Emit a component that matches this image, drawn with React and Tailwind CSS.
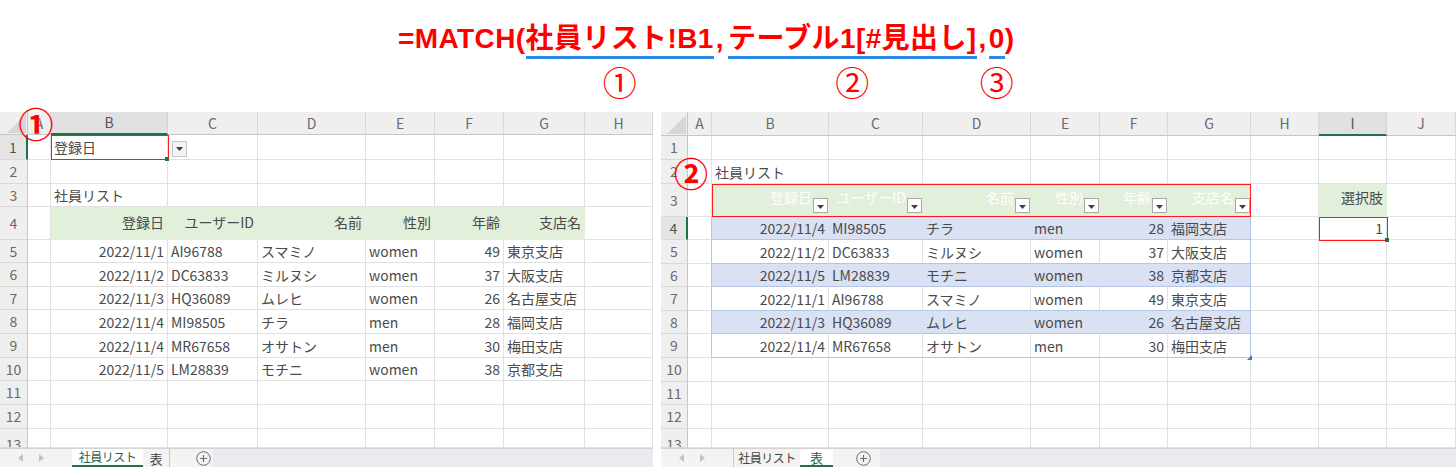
import React from "react";

const LEFT_LETTERS = ["A", "B", "C", "D", "E", "F", "G", "H"];
const RIGHT_LETTERS = ["A", "B", "C", "D", "E", "F", "G", "H", "I", "J"];

const HEADERS = ["登録日", "ユーザーID", "名前", "性別", "年齢", "支店名"];
const ALIGN = ["right", "left", "left", "left", "right", "left"];

const leftRows = [
  ["2022/11/1", "AI96788", "スマミノ", "women", "49", "東京支店"],
  ["2022/11/2", "DC63833", "ミルヌシ", "women", "37", "大阪支店"],
  ["2022/11/3", "HQ36089", "ムレヒ", "women", "26", "名古屋支店"],
  ["2022/11/4", "MI98505", "チラ", "men", "28", "福岡支店"],
  ["2022/11/4", "MR67658", "オサトン", "men", "30", "梅田支店"],
  ["2022/11/5", "LM28839", "モチニ", "women", "38", "京都支店"],
];

const rightRows = [
  ["2022/11/4", "MI98505", "チラ", "men", "28", "福岡支店"],
  ["2022/11/2", "DC63833", "ミルヌシ", "women", "37", "大阪支店"],
  ["2022/11/5", "LM28839", "モチニ", "women", "38", "京都支店"],
  ["2022/11/1", "AI96788", "スマミノ", "women", "49", "東京支店"],
  ["2022/11/3", "HQ36089", "ムレヒ", "women", "26", "名古屋支店"],
  ["2022/11/4", "MR67658", "オサトン", "men", "30", "梅田支店"],
];

// background + border colours of a cell, one entry per look
const STYLES = {
  plain: "bg-white border-r-[#e1e1e1] border-b-[#e1e1e1]",
  green: "bg-[#e2efda] border-r-[#e2efda] border-b-[#e2efda]",
  blue: "bg-[#d9e1f2] border-r-[#d9e1f2] border-b-[#b4c6e7]",
  blueEdge: "bg-[#d9e1f2] border-r-[#b4c6e7] border-b-[#b4c6e7]",
  white: "bg-white border-r-[#e1e1e1] border-b-[#b4c6e7]",
  whiteEdge: "bg-white border-r-[#b4c6e7] border-b-[#b4c6e7]",
  tableLeft: "bg-white border-r-[#b4c6e7] border-b-[#e1e1e1]",
};

function Arrow() {
  return (
    <svg width="7" height="4" viewBox="0 0 7 4">
      <path d="M0 0h7L3.5 4z" fill="#404040" />
    </svg>
  );
}

function FilterButton() {
  return (
    <div className="absolute right-0 bottom-[3px] w-[15px] h-[15px] bg-white border border-[#a9a9a9] flex items-end justify-center pb-[3px]">
      <Arrow />
    </div>
  );
}

function Cell({ spec, last }) {
  const style = STYLES[spec.style || "plain"];
  const align = spec.align === "right" ? "justify-end pr-[3px]" : "justify-start pl-[3px]";
  const pos = last ? "items-start pt-[5px] overflow-hidden" : "items-center";
  return (
    <div className={`relative flex whitespace-nowrap border-r border-b text-[14px] leading-[16px] ${style} ${align} ${pos}`}>
      {spec.head ? (
        <span className="pr-[13px] pb-[6px] text-white">{spec.text}</span>
      ) : (
        <span className={spec.pad || ""}>{spec.text}</span>
      )}
      {spec.head && <FilterButton />}
    </div>
  );
}

function ColHead({ label, selected }) {
  return selected ? (
    <div className="flex items-center justify-center bg-[#e1e1e1] border-r border-b-2 border-r-[#d4d4d4] border-b-[#217346] text-[14px] text-[#555]">
      {label}
    </div>
  ) : (
    <div className="flex items-center justify-center bg-[#efefef] border-r border-b border-r-[#d9d9d9] border-b-[#c6c6c6] text-[14px] text-[#6a6a6a]">
      {label}
    </div>
  );
}

function RowHead({ n, selected, last }) {
  const pos = last ? "items-start pt-[5px] overflow-hidden" : "items-center";
  return selected ? (
    <div className={`flex justify-center bg-[#e4e4e4] border-b border-r-2 border-b-[#d9d9d9] border-r-[#217346] text-[14px] text-[#555] ${pos}`}>
      {n}
    </div>
  ) : (
    <div className={`flex justify-center bg-[#efefef] border-b border-r border-b-[#d9d9d9] border-r-[#c6c6c6] text-[14px] text-[#6a6a6a] ${pos}`}>
      {n}
    </div>
  );
}

function Corner() {
  return (
    <div className="relative bg-[#efefef] border-r border-b border-r-[#c6c6c6] border-b-[#c6c6c6]">
      <svg className="absolute right-[1px] bottom-[1px]" width="19" height="19" viewBox="0 0 19 19">
        <path d="M19 0V19H0z" fill="#d6d6d6" />
      </svg>
    </div>
  );
}

function Plus() {
  return (
    <svg width="15" height="15" viewBox="0 0 15 15">
      <circle cx="7.5" cy="7.5" r="6.8" fill="none" stroke="#6b6b6b" strokeWidth="1" />
      <path d="M7.5 4v7M4 7.5h7" stroke="#6b6b6b" strokeWidth="1.1" />
    </svg>
  );
}

function ScrollArrows() {
  return (
    <div className="flex items-center gap-[16px]">
      <svg width="5" height="8" viewBox="0 0 5 8">
        <path d="M5 0v8L0 4z" fill="#c2c2c2" />
      </svg>
      <svg width="5" height="8" viewBox="0 0 5 8">
        <path d="M0 0v8l5-4z" fill="#c2c2c2" />
      </svg>
    </div>
  );
}

function TabBar({ activeFirst }) {
  return (
    <div className="flex h-[19px] border-t border-[#d4d4d4] text-[12px] leading-none">
      <div className="flex items-center w-[72px] pl-[18px] bg-[#f3f3f3]">
        <ScrollArrows />
      </div>
      {activeFirst ? (
        <>
          <div className="flex items-center justify-center w-[71px] bg-white border-b-2 border-[#217346] text-[#2d5f43] tracking-[-0.5px]">
            社員リスト
          </div>
          <div className="flex items-center justify-center w-[27px] bg-[#f3f3f3] border-r border-[#c8c8c8] text-[#444] text-[13px]">
            表
          </div>
          <div className="flex items-center w-[43px] pl-[26px] bg-[#f3f3f3]">
            <Plus />
          </div>
        </>
      ) : (
        <>
          <div className="flex items-center justify-center w-[67px] bg-[#f3f3f3] border-l border-[#c8c8c8] text-[#444] tracking-[-0.5px]">
            社員リスト
          </div>
          <div className="flex items-center justify-center w-[33px] bg-white border-b-2 border-[#217346] text-[#2d5f43] text-[13px]">
            表
          </div>
          <div className="flex items-center w-[47px] pl-[23px] bg-[#f3f3f3]">
            <Plus />
          </div>
        </>
      )}
      <div className="flex-1 bg-[#e9ebf0]" />
    </div>
  );
}

function Sheet({ gridClass, letters, selCol, selRow, cellAt, activeFirst, children }) {
  return (
    <div className="relative flex flex-col">
      <div className={`grid ${gridClass}`}>
        <Corner />
        {letters.map((l, i) => (
          <ColHead key={l} label={l} selected={i === selCol} />
        ))}
        {Array.from({ length: 13 }, (_, ri) => {
          const r = ri + 1;
          return (
            <React.Fragment key={r}>
              <RowHead n={r} selected={r === selRow} last={r === 13} />
              {letters.map((l, c) => (
                <Cell key={l} spec={cellAt(r, c)} last={r === 13} />
              ))}
            </React.Fragment>
          );
        })}
      </div>
      <TabBar activeFirst={activeFirst} />
      {children}
    </div>
  );
}

function leftCell(r, c) {
  if (r === 1 && c === 1) return { text: "登録日" };
  if (r === 3 && c === 1) return { text: "社員リスト" };
  if (r === 4 && c >= 1 && c <= 6)
    return { text: HEADERS[c - 1], align: "right", style: "green", pad: "pb-[2px]" };
  if (r >= 5 && r <= 10 && c >= 1 && c <= 6)
    return { text: leftRows[r - 5][c - 1], align: ALIGN[c - 1] };
  return {};
}

function rightCell(r, c) {
  if (r === 2 && c === 1) return { text: "社員リスト" };
  if (r === 3 && c >= 1 && c <= 6)
    return { text: HEADERS[c - 1], align: "right", style: "green", head: true };
  if (r === 3 && c === 8) return { text: "選択肢", align: "right", style: "green", pad: "pb-[6px]" };
  if (r >= 4 && r <= 9) {
    if (c === 0) return { style: "tableLeft" };
    if (c >= 1 && c <= 6) {
      const banded = r % 2 === 0;
      const edge = c === 6;
      const style = banded ? (edge ? "blueEdge" : "blue") : edge ? "whiteEdge" : "white";
      return { text: rightRows[r - 4][c - 1], align: ALIGN[c - 1], style };
    }
  }
  if (r === 4 && c === 8) return { text: "1", align: "right" };
  return {};
}

function Segment({ text, mark }) {
  return (
    <div className="flex flex-col">
      <span className="h-[28px] leading-[28px]">{text}</span>
      <div className="h-[3px] mt-[3px] bg-[#2e8be3]" />
      <div className="self-center w-0 flex justify-center mt-[8px]">
        <span className="text-[34px] leading-[34px] font-normal tracking-normal">{mark}</span>
      </div>
    </div>
  );
}

export default function App() {
  return (
    <div className="w-[1456px] h-[469px] overflow-hidden bg-white text-[#4a4a4a] font-['Noto_Sans_CJK_JP',sans-serif]">
      {/* formula */}
      <div className="h-[112px] pt-[25px] pl-[398px]">
        <div className="flex items-start text-[28px] font-bold text-[#ff0000] tracking-[0.4px] font-['Liberation_Sans','Noto_Sans_CJK_JP',sans-serif]">
          <span className="h-[28px] leading-[28px]">=MATCH(</span>
          <Segment text="社員リスト!B1" mark="①" />
          <span className="h-[28px] leading-[28px] pl-[2px] pr-[4px]">,</span>
          <Segment text="テーブル1[#見出し]" mark="②" />
          <span className="h-[28px] leading-[28px] pl-[2px] pr-[2px]">,</span>
          <Segment text="0" mark="③" />
          <span className="h-[28px] leading-[28px]">)</span>
        </div>
      </div>

      <div className="flex gap-[8px]">
        <div className="w-[653px]">
          <Sheet
            gridClass="grid-cols-[28px_23px_117px_90px_108px_69px_69px_81px_68px] grid-rows-[23px_25px_24px_23px_33px_23px_24px_23px_24px_24px_23px_24px_24px_19px]"
            letters={LEFT_LETTERS}
            selCol={1}
            selRow={1}
            cellAt={leftCell}
            activeFirst
          >
            <div className="absolute left-[51px] top-[23px] w-[118px] h-[25px] border-[1.5px] border-[#ff1a1a]" />
            <div className="absolute left-[165px] top-[45px] w-[4px] h-[4px] bg-[#217346]" />
            <div className="absolute left-[172px] top-[29px] w-[15px] h-[16px] bg-[#f4f4f4] border border-[#c4c4c4] flex items-center justify-center">
              <Arrow />
            </div>
            <span className="absolute left-[18px] top-[-6px] w-[36px] h-[32px] flex items-center justify-center text-[35px] leading-none font-bold text-[#ff0000]">
              ①
            </span>
          </Sheet>
        </div>

        <div className="w-[795px]">
          <Sheet
            gridClass="grid-cols-[27px_24px_117px_94px_108px_69px_68px_83px_68px_68px_69px] grid-rows-[24px_24px_24px_33px_23px_24px_23px_24px_23px_24px_24px_23px_24px_19px]"
            letters={RIGHT_LETTERS}
            selCol={8}
            selRow={4}
            cellAt={rightCell}
            activeFirst={false}
          >
            <div className="absolute left-[51px] top-[72px] w-[539px] h-[33px] border-[1.5px] border-[#ff1a1a]" />
            <div className="absolute left-[658px] top-[105px] w-[69px] h-[24px] border-[1.5px] border-[#ff1a1a]" />
            <div className="absolute left-[724px] top-[126px] w-[4px] h-[4px] bg-[#217346]" />
            <svg className="absolute left-[586px] top-[243px]" width="5" height="5" viewBox="0 0 5 5">
              <path d="M5 0V5H0z" fill="#4472c4" />
            </svg>
            <span className="absolute left-[12px] top-[45px] w-[36px] h-[32px] flex items-center justify-center text-[34px] leading-none font-bold text-[#ff0000]">
              ②
            </span>
          </Sheet>
        </div>
      </div>
    </div>
  );
}
